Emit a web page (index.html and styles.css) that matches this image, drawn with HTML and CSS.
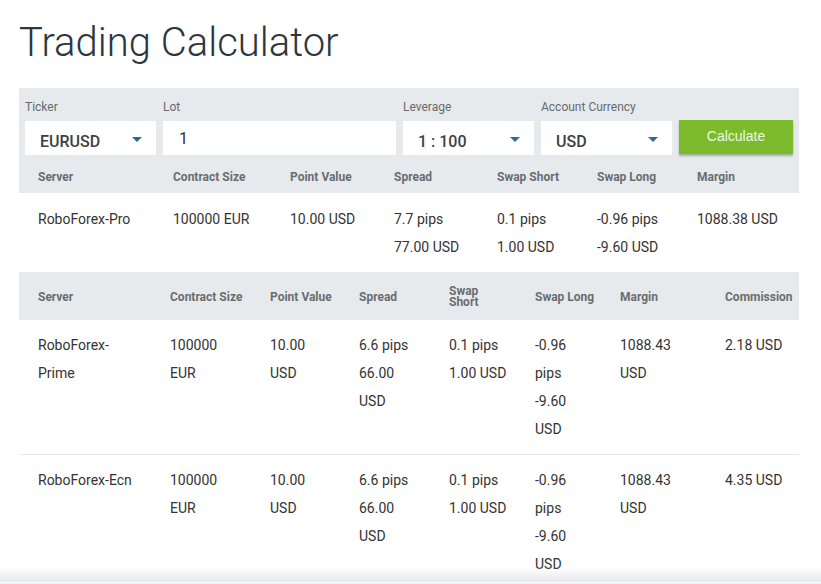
FILE: index.html
```html
<!DOCTYPE html>
<html lang="en">
<head>
<meta charset="utf-8">
<title>Trading Calculator</title>
<link rel="stylesheet" href="styles.css">
</head>
<body>
<main class="page">
  <h1 class="title">Trading Calculator</h1>

  <section class="panel">
    <div class="form">
      <label class="field f-ticker">
        <span class="label">Ticker</span>
        <span class="select"><span class="val">EURUSD</span><span class="caret"></span></span>
      </label>
      <label class="field f-lot">
        <span class="label">Lot</span>
        <span class="input">1</span>
      </label>
      <label class="field f-lev">
        <span class="label">Leverage</span>
        <span class="select"><span class="val">1 : 100</span><span class="caret"></span></span>
      </label>
      <label class="field f-cur">
        <span class="label">Account Currency</span>
        <span class="select"><span class="val">USD</span><span class="caret"></span></span>
      </label>
      <button class="calc" type="button">Calculate</button>
    </div>

    <table class="t1">
      <colgroup>
        <col class="w154"><col class="w117"><col class="w104"><col class="w103"><col class="w100"><col class="w100"><col>
      </colgroup>
      <thead>
        <tr>
          <th class="first">Server</th><th>Contract Size</th><th>Point Value</th><th>Spread</th><th>Swap Short</th><th>Swap Long</th><th>Margin</th>
        </tr>
      </thead>
      <tbody>
        <tr>
          <td class="first">RoboForex-Pro</td>
          <td>100000 EUR</td>
          <td>10.00 USD</td>
          <td><div>7.7 pips</div><div>77.00 USD</div></td>
          <td><div>0.1 pips</div><div>1.00 USD</div></td>
          <td><div>-0.96 pips</div><div>-9.60 USD</div></td>
          <td>1088.38 USD</td>
        </tr>
      </tbody>
    </table>
  </section>

  <table class="t2">
    <colgroup>
      <col class="v151"><col class="v100"><col class="v89"><col class="v90"><col class="v86"><col class="v85"><col class="v105"><col>
    </colgroup>
    <thead>
      <tr>
        <th class="first">Server</th><th>Contract Size</th><th>Point Value</th><th>Spread</th><th class="two">Swap Short</th><th>Swap Long</th><th>Margin</th><th>Commission</th>
      </tr>
    </thead>
    <tbody>
      <tr>
        <td class="first"><div class="w-srv">RoboForex-Prime</div></td>
        <td><div class="w-60">100000 EUR</div></td>
        <td><div class="w-55">10.00 USD</div></td>
        <td><div class="w-60">6.6 pips</div><div class="w-60">66.00 USD</div></td>
        <td><div>0.1 pips</div><div>1.00 USD</div></td>
        <td><div class="w-50">-0.96 pips</div><div class="w-50">-9.60 USD</div></td>
        <td><div class="w-60">1088.43 USD</div></td>
        <td>2.18 USD</td>
      </tr>
      <tr>
        <td class="first"><div class="w-srv">RoboForex-Ecn</div></td>
        <td><div class="w-60">100000 EUR</div></td>
        <td><div class="w-55">10.00 USD</div></td>
        <td><div class="w-60">6.6 pips</div><div class="w-60">66.00 USD</div></td>
        <td><div>0.1 pips</div><div>1.00 USD</div></td>
        <td><div class="w-50">-0.96 pips</div><div class="w-50">-9.60 USD</div></td>
        <td><div class="w-60">1088.43 USD</div></td>
        <td>4.35 USD</td>
      </tr>
    </tbody>
  </table>
</main>
<div class="fade"></div>
<div class="strip"></div>
</body>
</html>
```

FILE: styles.css
```css
html, body {
  margin: 0;
  padding: 0;
  overflow: hidden;
  background: #ffffff;
}

body {
  font-family: Roboto, "Liberation Sans", Arial, sans-serif;
  color: #333333;
}

.page {
  padding: 0 22px 0 19px;
  width: 780px;
}

.title {
  margin: 0;
  padding: 18px 0 20px 0;
  font-size: 40px;
  line-height: 50px;
  font-weight: 300;
  color: #2d3640;
}

.panel {
  background: #e6eaed;
}

.form {
  display: flex;
  align-items: flex-end;
  gap: 7px;
  padding: 11px 6px 0 6px;
}

.field {
  display: flex;
  flex-direction: column;
}

.label {
  font-size: 12px;
  line-height: 16px;
  color: #666a6e;
  margin-bottom: 6px;
}

.f-ticker, .f-lev, .f-cur { width: 131px; }
.f-lot { width: 233px; }

.select, .input {
  height: 34px;
  background: #ffffff;
  box-sizing: border-box;
  display: flex;
  align-items: center;
  font-size: 16px;
  color: #3c3f42;
}

.select {
  justify-content: space-between;
  padding: 7px 14px 0 15px;
  font-weight: 500;
}

.select .val {
  line-height: 20px;
}

.caret {
  width: 0;
  height: 0;
  border-left: 5px solid transparent;
  border-right: 5px solid transparent;
  border-top: 5px solid #2d6c8c;
  margin-top: -5px;
}

.input {
  padding: 1px 0 0 16px;
  font-weight: 400;
  color: #2f3235;
}

.calc {
  width: 114px;
  height: 34px;
  margin-bottom: 1px;
  border: 0;
  border-radius: 0;
  background: #7cbb2b;
  color: #eff7e2;
  font-family: "Liberation Sans", Arial, sans-serif;
  font-size: 14px;
  box-shadow: 0 2px 2px rgba(40, 70, 10, 0.35);
  padding: 0 0 2px 0;
}

table {
  border-collapse: collapse;
  table-layout: fixed;
  width: 780px;
}

th {
  font-size: 12px;
  font-weight: 700;
  color: #696d71;
  text-align: left;
  padding: 0;
}

td {
  font-size: 14px;
  line-height: 28px;
  color: #333333;
  vertical-align: top;
  text-align: left;
  padding: 0;
}

.first { padding-left: 19px; }

.w154 { width: 154px; }
.w117 { width: 117px; }
.w104 { width: 104px; }
.w103 { width: 103px; }
.w100 { width: 100px; }

.t1 th {
  height: 38px;
  padding-top: 6px;
  box-sizing: border-box;
  vertical-align: middle;
}

.t1 tbody tr {
  background: #ffffff;
}

.t1 td {
  padding-top: 12px;
  padding-bottom: 11px;
}

.t1 td.first { padding-left: 19px; }

.v151 { width: 151px; }
.v100 { width: 100px; }
.v89 { width: 89px; }
.v90 { width: 90px; }
.v86 { width: 86px; }
.v85 { width: 85px; }
.v105 { width: 105px; }

.t2 thead tr {
  background: #e6eaed;
}

.t2 th {
  height: 48px;
  padding-top: 2px;
  box-sizing: border-box;
  vertical-align: middle;
}

.t2 th.two {
  line-height: 11px;
  padding-right: 30px;
}

.t2 td {
  padding-top: 11px;
  padding-bottom: 11px;
}

.t2 tbody tr {
  border-bottom: 1px solid #e6e8ea;
}

.w-srv { width: 100px; }
.w-60 { width: 60px; }
.w-55 { width: 55px; }
.w-50 { width: 50px; }

.fade {
  position: fixed;
  left: 0;
  right: 0;
  bottom: 4px;
  height: 13px;
  background: linear-gradient(to bottom, rgba(255, 255, 255, 0), #ebebeb);
}

.strip {
  position: fixed;
  left: 0;
  right: 0;
  bottom: 0;
  height: 4px;
  background: #eff3f7;
  border-top: 1px solid #dfe5ea;
  box-sizing: border-box;
}
```
